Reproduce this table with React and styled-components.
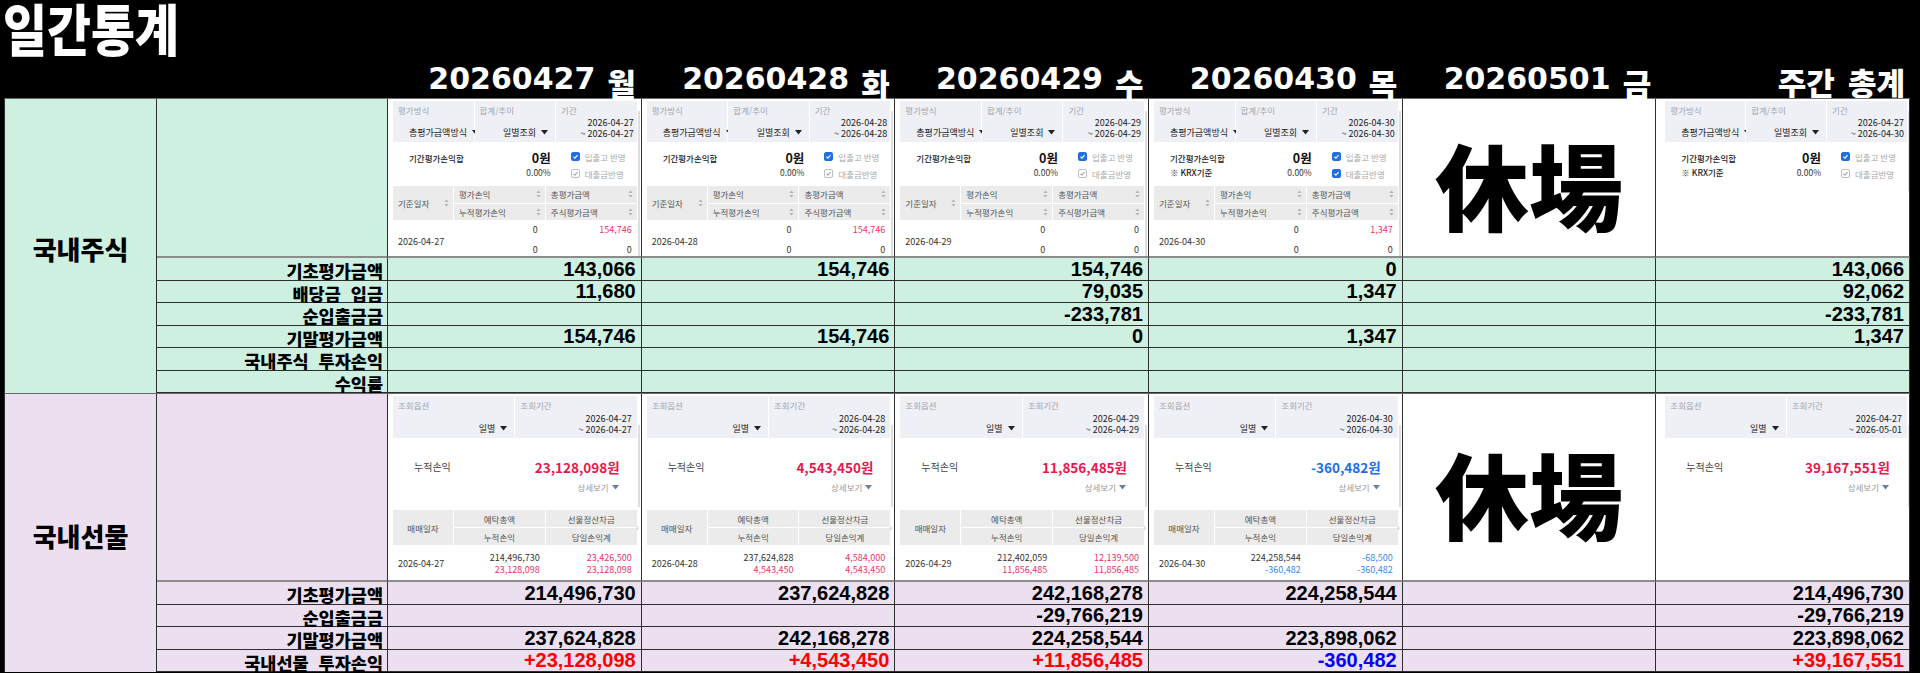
import React from 'react';
import styled, { createGlobalStyle } from 'styled-components';

const GlobalStyle = createGlobalStyle`
  html, body {
    margin: 0;
    padding: 0;
    background: #000;
  }
  body {
    font-family: 'Noto Sans CJK KR', 'Noto Sans', sans-serif;
  }
  #root {
    width: 1920px;
    height: 673px;
    overflow: hidden;
  }
`;

const COLS = '152px 231px repeat(6, 1fr)';
const LINE = '#2e2e2e';
const UP = '#e8174a';
const UP_SOFT = '#e8336b';
const DOWN = '#1a6fe8';
const DOWN_SOFT = '#3b86f0';

const Page = styled.div`
  width: 1920px;
  height: 673px;
  background: #000;
  display: flex;
  flex-direction: column;
`;

const TitleBar = styled.div`
  height: 55px;
  flex: none;
  display: flex;
  align-items: flex-end;
  padding-left: 3px;
`;

const Title = styled.h1`
  margin: 0;
  color: #fff;
  font: 900 46px/46px 'Noto Sans CJK KR', sans-serif;
  transform: scale(1.04, 1.2);
  transform-origin: left bottom;
  white-space: nowrap;
`;

const DayHeader = styled.div`
  display: grid;
  grid-template-columns: ${COLS};
  height: 43px;
  width: 1906px;
  margin-left: 4px;
`;

const DayTitle = styled.div`
  display: flex;
  align-items: flex-end;
  justify-content: flex-end;
  padding: 0 5px 4px 0;
  color: #fff;
  font: 700 30px/1 'DejaVu Sans', 'Noto Sans CJK KR', sans-serif;
  white-space: pre;

  b {
    font: 900 31px/1 'Noto Sans CJK KR', sans-serif;
    margin-left: 12px;
    position: relative;
    top: 4px;
  }
`;

const WeekTitle = styled(DayTitle)`
  font: 900 31px/1 'Noto Sans CJK KR', sans-serif;
  word-spacing: 6px;
  padding-bottom: 1px;
`;

const Table = styled.div`
  width: 1906px;
  margin-left: 4px;
  display: flex;
  flex-direction: column;
`;

const Section = styled.section`
  display: grid;
  grid-template-columns: ${COLS};
  grid-template-rows: ${p => p.$shot}px repeat(${p => p.$rows}, 22.5px);
  background: ${p => p.$bg};
  border-top: 1px solid #6a6a6a;
  border-left: 1px solid ${LINE};
`;

const Cell = styled.div`
  min-width: 0;
  border-right: 1px solid ${LINE};
  border-bottom: 1px solid ${LINE};
`;

const MarketCell = styled(Cell)`
  grid-row: 1 / -1;
  display: flex;
  align-items: center;
  justify-content: center;
  padding-top: 6px;
  font: 900 26px/1 'Noto Sans CJK KR', sans-serif;
  color: #000;
  border-bottom: 0;
`;

const BlankCell = styled(Cell)`
  border-bottom: 2px solid #8c8c8c;
`;

const ShotCell = styled(Cell)`
  background: #fff;
  padding: 2px ${p => (p.$wide ? '2px' : '4px')} 0 ${p => (p.$wide ? '9px' : '5px')};
  border-bottom: 2px solid #8c8c8c;
  overflow: hidden;
`;

const ClosedCell = styled(Cell)`
  background: #fff;
  display: flex;
  align-items: center;
  justify-content: center;
  font: 900 94px/1 'Noto Sans CJK JP', sans-serif;
  color: #000;
  border-bottom: 2px solid #8c8c8c;
  padding-top: 10px;
`;

const RowLabel = styled(Cell)`
  display: flex;
  align-items: flex-end;
  justify-content: flex-end;
  padding-right: 4px;
  font: 900 17.5px/1 'Noto Sans CJK KR', sans-serif;
  word-spacing: 6px;
  color: #000;
  white-space: nowrap;
`;

const Value = styled(Cell)`
  display: flex;
  align-items: flex-end;
  justify-content: flex-end;
  padding: 0 5px 1px 0;
  font: 700 20px/1 'Liberation Sans', Arial, sans-serif;
  color: ${p => (p.$tone === 'up' ? '#ff0000' : p.$tone === 'down' ? '#0000ff' : '#000')};
`;

/* --- captured screen parts inside the cells --- */

const Shot = styled.div`
  position: relative;
  height: 100%;
  display: flex;
  flex-direction: column;
  background: #fff;
  color: #333;
  font-family: 'Noto Sans CJK KR', sans-serif;
`;

const Scrollbar = styled.div`
  position: absolute;
  right: -3px;
  top: ${p => p.$top}px;
  height: ${p => p.$height}px;
  width: 2px;
  background: #dedede;
`;

const Band = styled.div`
  display: grid;
  grid-template-columns: ${p => p.$cols};
  gap: 1px;
  height: ${p => p.$h}px;
  flex: none;
`;

const BandCell = styled.div`
  position: relative;
  background: #eef0f5;
  padding: 4px 4px 0 5px;
`;

const BandLabel = styled.div`
  font-size: 8.5px;
  line-height: 11px;
  color: #a3a6ae;
`;

const BandValue = styled.div`
  position: absolute;
  bottom: 4px;
  ${p => (p.$right != null ? `right: ${p.$right}px;` : `left: ${p.$left}px;`)}
  display: flex;
  align-items: center;
  gap: 5px;
  font-size: 9px;
  line-height: 11px;
  color: #222;
  white-space: nowrap;
`;

const Dates = styled.div`
  position: absolute;
  right: ${p => p.$right}px;
  bottom: 3px;
  font-size: 9px;
  line-height: 11px;
  color: #222;
  text-align: right;
  white-space: nowrap;
`;

const Summary = styled.div`
  display: grid;
  grid-template-columns: 1fr auto 86px;
  height: 44px;
  flex: none;
  padding-top: 9px;
  box-sizing: border-box;
`;

const SumTitle = styled.div`
  padding-left: 16px;
  font-size: 8.5px;
  line-height: 14px;
  font-weight: 500;
  color: #222;
`;

const SumAmount = styled.div`
  text-align: right;
  font-size: 8.5px;
  line-height: 14px;
  color: #333;

  strong {
    display: block;
    font-size: 12.5px;
    font-weight: 700;
    color: #111;
  }
`;

const Checks = styled.div`
  padding: 0 0 0 20px;
  margin-top: -3px;
  display: flex;
  flex-direction: column;
`;

const CheckRow = styled.div`
  display: flex;
  align-items: center;
  gap: 5px;
  height: 17px;
  font-size: 8.5px;
  color: #a9a9a9;
  white-space: nowrap;
`;

const Box = styled.span`
  width: 9px;
  height: 9px;
  border-radius: 2px;
  box-sizing: border-box;
  display: inline-flex;
  align-items: center;
  justify-content: center;
  background: ${p => (p.$on ? '#1f6fe5' : '#fff')};
  border: 1px solid ${p => (p.$on ? '#1f6fe5' : '#bdbdbd')};
`;

const HeadGrid = styled.div`
  position: relative;
  display: grid;
  grid-template-columns: 60px 1fr 1fr;
  gap: 1px;
  height: ${p => p.$h}px;
  flex: none;
`;

const HeadCell = styled.div`
  background: #ebebeb;
  display: flex;
  align-items: center;
  justify-content: ${p => (p.$center ? 'center' : 'space-between')};
  padding: 0 ${p => (p.$center ? 0 : 4)}px 0 ${p => (p.$center ? 0 : 5)}px;
  font-size: 8.5px;
  line-height: 12px;
  color: #555;
  white-space: nowrap;
`;

const HeadStack = styled.div`
  display: grid;
  grid-template-rows: 1fr 1fr;
  gap: 1px;
`;

const More = styled.span`
  position: absolute;
  right: -2px;
  top: 50%;
  transform: translateY(-55%);
  font-size: 10px;
  line-height: 12px;
  color: #bbb;
`;

const DataGrid = styled.div`
  display: grid;
  grid-template-columns: 60px 1fr 1fr;
  height: ${p => p.$h}px;
  flex: none;
  font-size: 9px;
  color: #333;
`;

const DateCell = styled.div`
  display: flex;
  align-items: center;
  padding-left: 5px;
  padding-top: ${p => p.$shift || 0}px;
`;

const NumCell = styled.div`
  display: flex;
  flex-direction: column;
  justify-content: center;
  align-items: flex-end;
  padding-right: ${p => p.$pad}px;
  line-height: ${p => p.$lh}px;
`;

const Num = styled.span`
  color: ${p => (p.$tone === 'up' ? UP_SOFT : p.$tone === 'down' ? DOWN_SOFT : '#333')};
`;

const FutSummary = styled.div`
  position: relative;
  height: 72px;
  flex: none;
`;

const FutTitle = styled.div`
  position: absolute;
  left: 21px;
  top: 21px;
  font-size: 10px;
  line-height: 16px;
  color: #444;
`;

const FutAmount = styled.div`
  position: absolute;
  right: 17px;
  top: 20px;
  font-size: 13.5px;
  line-height: 18px;
  font-weight: 700;
  color: ${p => (p.$tone === 'down' ? DOWN : UP)};
`;

const Detail = styled.div`
  position: absolute;
  right: 18px;
  top: 43px;
  display: flex;
  align-items: center;
  gap: 3px;
  font-size: 8.5px;
  line-height: 12px;
  color: #9a9a9a;
`;

const Caret = ({ color = '#222' }) => (
  <svg width="7" height="5" viewBox="0 0 7 5">
    <path d="M0 0H7L3.5 4.6Z" fill={color} />
  </svg>
);

const Sort = () => (
  <svg width="5" height="8" viewBox="0 0 5 8">
    <path d="M2.5 0.4L4.6 3H0.4Z M2.5 7.6L4.6 5H0.4Z" fill="#b3b3b3" />
  </svg>
);

const Check = ({ on }) => (
  <Box $on={on}>
    <svg width="7" height="7" viewBox="0 0 10 10">
      <path d="M2 5.2L4.2 7.3L8 3" stroke={on ? '#fff' : '#aaa'} strokeWidth="1.6" fill="none" />
    </svg>
  </Box>
);

function StockShot({ d }) {
  return (
    <Shot>
      <Scrollbar $top={10} $height={d.table ? 145 : 80} />
      <Band $cols="1fr 1fr 1fr" $h={41}>
        <BandCell>
          <BandLabel>평가방식</BandLabel>
          <BandValue $left={16}>
            총평가금액방식 <Caret />
          </BandValue>
        </BandCell>
        <BandCell>
          <BandLabel>합계/추이</BandLabel>
          <BandValue $right={7}>
            일별조회 <Caret />
          </BandValue>
        </BandCell>
        <BandCell>
          <BandLabel>기간</BandLabel>
          <Dates $right={3}>
            {d.from}
            <br />~ {d.to}
          </Dates>
        </BandCell>
      </Band>
      <Summary>
        <SumTitle>
          기간평가손익합
          {d.krx && <div>※ KRX기준</div>}
        </SumTitle>
        <SumAmount>
          <strong>0원</strong>
          0.00%
        </SumAmount>
        <Checks>
          <CheckRow>
            <Check on /> 입출고 반영
          </CheckRow>
          <CheckRow>
            <Check on={d.loan} /> 대출금반영
          </CheckRow>
        </Checks>
      </Summary>
      {d.table && (
        <>
          <HeadGrid $h={34}>
            <HeadCell>
              기준일자 <Sort />
            </HeadCell>
            <HeadStack>
              <HeadCell>
                평가손익 <Sort />
              </HeadCell>
              <HeadCell>
                누적평가손익 <Sort />
              </HeadCell>
            </HeadStack>
            <HeadStack>
              <HeadCell>
                총평가금액 <Sort />
              </HeadCell>
              <HeadCell>
                주식평가금액 <Sort />
              </HeadCell>
            </HeadStack>
          </HeadGrid>
          <DataGrid $h={38}>
            <DateCell $shift={2}>{d.from}</DateCell>
            <NumCell $pad={7} $lh={20}>
              <Num>0</Num>
              <Num>0</Num>
            </NumCell>
            <NumCell $pad={5} $lh={20}>
              <Num $tone={d.table !== '0' ? 'up' : undefined}>{d.table}</Num>
              <Num>0</Num>
            </NumCell>
          </DataGrid>
        </>
      )}
    </Shot>
  );
}

function FuturesShot({ d }) {
  const t = d.table;
  return (
    <Shot>
      <Scrollbar $top={29} $height={82} />
      <Band $cols="1fr 1fr" $h={42}>
        <BandCell>
          <BandLabel>조회옵션</BandLabel>
          <BandValue $right={7}>
            일별 <Caret />
          </BandValue>
        </BandCell>
        <BandCell>
          <BandLabel>조회기간</BandLabel>
          <Dates $right={5}>
            {d.from}
            <br />~ {d.to}
          </Dates>
        </BandCell>
      </Band>
      <FutSummary>
        <FutTitle>누적손익</FutTitle>
        <FutAmount $tone={d.tone}>{d.total}</FutAmount>
        <Detail>
          상세보기 <Caret color="#6b7ea6" />
        </Detail>
      </FutSummary>
      {t && (
        <>
          <HeadGrid $h={35}>
            <HeadCell $center>매매일자</HeadCell>
            <HeadStack>
              <HeadCell $center>예탁총액</HeadCell>
              <HeadCell $center>누적손익</HeadCell>
            </HeadStack>
            <HeadStack>
              <HeadCell $center>선물정산차금</HeadCell>
              <HeadCell $center>당일손익계</HeadCell>
            </HeadStack>
            <More>›</More>
          </HeadGrid>
          <DataGrid $h={37}>
            <DateCell>{d.from}</DateCell>
            <NumCell $pad={5} $lh={12}>
              <Num>{t.deposit}</Num>
              <Num $tone={d.tone}>{t.cum}</Num>
            </NumCell>
            <NumCell $pad={5} $lh={12}>
              <Num $tone={d.tone}>{t.settle}</Num>
              <Num $tone={d.tone}>{t.day}</Num>
            </NumCell>
          </DataGrid>
        </>
      )}
    </Shot>
  );
}

const days = [
  { date: '20260427', wd: '월' },
  { date: '20260428', wd: '화' },
  { date: '20260429', wd: '수' },
  { date: '20260430', wd: '목' },
  { date: '20260501', wd: '금' },
];

const stockShots = [
  { from: '2026-04-27', to: '2026-04-27', krx: false, loan: false, table: '154,746' },
  { from: '2026-04-28', to: '2026-04-28', krx: false, loan: false, table: '154,746' },
  { from: '2026-04-29', to: '2026-04-29', krx: false, loan: false, table: '0' },
  { from: '2026-04-30', to: '2026-04-30', krx: true, loan: true, table: '1,347' },
  null,
  { from: '2026-04-27', to: '2026-04-30', krx: true, loan: false, table: null, wide: true },
];

const futuresShots = [
  {
    from: '2026-04-27', to: '2026-04-27', total: '23,128,098원', tone: 'up',
    table: { deposit: '214,496,730', cum: '23,128,098', settle: '23,426,500', day: '23,128,098' },
  },
  {
    from: '2026-04-28', to: '2026-04-28', total: '4,543,450원', tone: 'up',
    table: { deposit: '237,624,828', cum: '4,543,450', settle: '4,584,000', day: '4,543,450' },
  },
  {
    from: '2026-04-29', to: '2026-04-29', total: '11,856,485원', tone: 'up',
    table: { deposit: '212,402,059', cum: '11,856,485', settle: '12,139,500', day: '11,856,485' },
  },
  {
    from: '2026-04-30', to: '2026-04-30', total: '-360,482원', tone: 'down',
    table: { deposit: '224,258,544', cum: '-360,482', settle: '-68,500', day: '-360,482' },
  },
  null,
  { from: '2026-04-27', to: '2026-05-01', total: '39,167,551원', tone: 'up', table: null, wide: true },
];

const stockRows = [
  { label: '기초평가금액', values: ['143,066', '154,746', '154,746', '0', '', '143,066'] },
  { label: '배당금 입금', values: ['11,680', '', '79,035', '1,347', '', '92,062'] },
  { label: '순입출금금', values: ['', '', '-233,781', '', '', '-233,781'] },
  { label: '기말평가금액', values: ['154,746', '154,746', '0', '1,347', '', '1,347'] },
  { label: '국내주식 투자손익', values: ['', '', '', '', '', ''] },
  { label: '수익률', values: ['', '', '', '', '', ''] },
];

const futuresRows = [
  { label: '기초평가금액', values: ['214,496,730', '237,624,828', '242,168,278', '224,258,544', '', '214,496,730'] },
  { label: '순입출금금', values: ['', '', '-29,766,219', '', '', '-29,766,219'] },
  { label: '기말평가금액', values: ['237,624,828', '242,168,278', '224,258,544', '223,898,062', '', '223,898,062'] },
  {
    label: '국내선물 투자손익',
    values: ['+23,128,098', '+4,543,450', '+11,856,485', '-360,482', '', '+39,167,551'],
    colored: true,
  },
];

const toneOf = v => (v.startsWith('+') ? 'up' : v.startsWith('-') ? 'down' : undefined);

function MarketSection({ name, bg, shotHeight, shots, rows, Shot: ShotView }) {
  return (
    <Section $bg={bg} $shot={shotHeight} $rows={rows.length}>
      <MarketCell>{name}</MarketCell>
      <BlankCell />
      {shots.map((s, i) =>
        s ? (
          <ShotCell key={i} $wide={s.wide}>
            <ShotView d={s} />
          </ShotCell>
        ) : (
          <ClosedCell key={i}>休場</ClosedCell>
        )
      )}
      {rows.map(row => (
        <React.Fragment key={row.label}>
          <RowLabel>{row.label}</RowLabel>
          {row.values.map((v, i) => (
            <Value key={i} $tone={row.colored ? toneOf(v) : undefined}>
              {v}
            </Value>
          ))}
        </React.Fragment>
      ))}
    </Section>
  );
}

export default function App() {
  return (
    <Page>
      <GlobalStyle />
      <TitleBar>
        <Title>일간통계</Title>
      </TitleBar>
      <DayHeader>
        <div />
        <div />
        {days.map(d => (
          <DayTitle key={d.date}>
            {d.date}
            <b>{d.wd}</b>
          </DayTitle>
        ))}
        <WeekTitle>주간 총계</WeekTitle>
      </DayHeader>
      <Table>
        <MarketSection
          name="국내주식"
          bg="#cdf0e1"
          shotHeight={159}
          shots={stockShots}
          rows={stockRows}
          Shot={StockShot}
        />
        <MarketSection
          name="국내선물"
          bg="#ebdff0"
          shotHeight={188}
          shots={futuresShots}
          rows={futuresRows}
          Shot={FuturesShot}
        />
      </Table>
    </Page>
  );
}
